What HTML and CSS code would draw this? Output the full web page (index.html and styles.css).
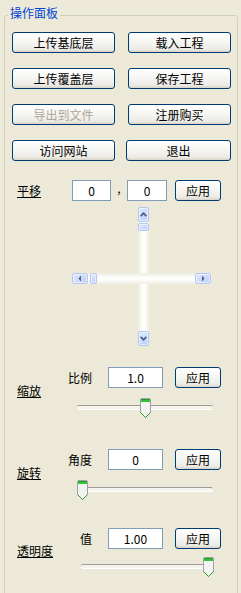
FILE: index.html
```html
<!DOCTYPE html>
<html lang="zh-CN">
<head>
    <meta charset="UTF-8">
    <meta name="viewport" content="width=device-width, initial-scale=1.0">
    <title>操作面板</title>
    <link rel="stylesheet" href="styles.css">
</head>
<body>

    <div class="panel">
        <span class="panel-title">操作面板</span>

        <!-- Main actions -->
        <div class="actions">
            <button class="btn">上传基底层</button>
            <button class="btn">载入工程</button>
            <button class="btn">上传覆盖层</button>
            <button class="btn">保存工程</button>
            <button class="btn" disabled>导出到文件</button>
            <button class="btn">注册购买</button>
            <button class="btn">访问网站</button>
            <button class="btn btn-shift">退出</button>
        </div>

        <!-- Pan -->
        <div class="pan-row">
            <span class="prop-name pan-name">平移</span>
            <input class="field field-x" type="text" value="0">
            <span class="sep">,</span>
            <input class="field field-y" type="text" value="0">
            <button class="btn btn-apply">应用</button>
        </div>

        <div class="cross">
            <div class="vscroll">
                <span class="sb-btn sb-vbtn">
                    <svg width="7" height="5" viewBox="0 0 7 5"><path d="M0.6 4.2L3.5 1.3L6.4 4.2" fill="none" stroke="#4D6185" stroke-width="1.7"/></svg>
                </span>
                <span class="sb-thumb sb-vthumb"></span>
                <span class="sb-fill"></span>
                <span class="sb-btn sb-vbtn">
                    <svg width="7" height="5" viewBox="0 0 7 5"><path d="M0.6 0.8L3.5 3.7L6.4 0.8" fill="none" stroke="#4D6185" stroke-width="1.7"/></svg>
                </span>
            </div>
            <div class="hscroll">
                <span class="sb-btn sb-hbtn">
                    <svg width="4" height="7" viewBox="0 0 4 7"><path d="M3 0.5v6L0.5 3.5z" fill="#4D6185"/></svg>
                </span>
                <span class="sb-thumb sb-hthumb"></span>
                <span class="sb-fill"></span>
                <span class="sb-btn sb-hbtn">
                    <svg width="4" height="7" viewBox="0 0 4 7"><path d="M1 0.5v6L3.5 3.5z" fill="#4D6185"/></svg>
                </span>
            </div>
        </div>

        <!-- Scale -->
        <div class="prop prop-scale">
            <span class="prop-name">缩放</span>
            <div class="prop-body">
                <div class="prop-row">
                    <span class="prop-label">比例</span>
                    <input class="field" type="text" value="1.0">
                    <button class="btn btn-apply">应用</button>
                </div>
                <div class="slider">
                    <span class="thumb" style="margin-left: 63px">
                        <svg width="11" height="20" viewBox="0 0 11 20"><path d="M1.5 0.5h8a1 1 0 0 1 1 1v13l-5 5-5-5v-13a1 1 0 0 1 1-1z" fill="#F3F3EF" stroke="#9CA3AE"/><rect x="1" y="1" width="9" height="3" fill="#36C236"/><rect x="1" y="1" width="9" height="1" fill="#1FA01F"/><path d="M10.5 14.5l-5 5-5-5" fill="none" stroke="#2E9A2E"/></svg>
                    </span>
                </div>
            </div>
        </div>

        <!-- Rotate -->
        <div class="prop prop-rotate">
            <span class="prop-name">旋转</span>
            <div class="prop-body">
                <div class="prop-row">
                    <span class="prop-label">角度</span>
                    <input class="field" type="text" value="0">
                    <button class="btn btn-apply">应用</button>
                </div>
                <div class="slider">
                    <span class="thumb" style="margin-left: 0px">
                        <svg width="11" height="20" viewBox="0 0 11 20"><path d="M1.5 0.5h8a1 1 0 0 1 1 1v13l-5 5-5-5v-13a1 1 0 0 1 1-1z" fill="#F3F3EF" stroke="#9CA3AE"/><rect x="1" y="1" width="9" height="3" fill="#36C236"/><rect x="1" y="1" width="9" height="1" fill="#1FA01F"/><path d="M10.5 14.5l-5 5-5-5" fill="none" stroke="#2E9A2E"/></svg>
                    </span>
                </div>
            </div>
        </div>

        <!-- Opacity -->
        <div class="prop prop-alpha">
            <span class="prop-name">透明度</span>
            <div class="prop-body">
                <div class="prop-row">
                    <span class="prop-label">值</span>
                    <input class="field" type="text" value="1.00">
                    <button class="btn btn-apply">应用</button>
                </div>
                <div class="slider">
                    <span class="thumb" style="margin-left: 122px">
                        <svg width="11" height="20" viewBox="0 0 11 20"><path d="M1.5 0.5h8a1 1 0 0 1 1 1v13l-5 5-5-5v-13a1 1 0 0 1 1-1z" fill="#F3F3EF" stroke="#9CA3AE"/><rect x="1" y="1" width="9" height="3" fill="#36C236"/><rect x="1" y="1" width="9" height="1" fill="#1FA01F"/><path d="M10.5 14.5l-5 5-5-5" fill="none" stroke="#2E9A2E"/></svg>
                    </span>
                </div>
            </div>
        </div>
    </div>

</body>
</html>
```

FILE: styles.css
```css
html, body {
    height: 593px;
    overflow: hidden;
}
body {
    margin: 0;
    background-color: #ece9d8;
    font-family: "Noto Sans CJK SC", "Liberation Sans", sans-serif;
    font-size: 12px;
    color: #000;
}
.panel {
    position: relative;
    margin: 15px 3px 0 4px;
    padding: 16px 0 40px 7px;
    border: 1px solid #d0d0bf;
    border-radius: 3px;
}
.panel-title {
    position: absolute;
    top: -10px;
    left: 3px;
    padding: 0 2px;
    line-height: 14px;
    color: #0046d5;
    background-color: #ece9d8;
}
.actions {
    display: grid;
    grid-template-columns: 103px 103px;
    column-gap: 13px;
    row-gap: 15px;
}
.btn {
    height: 21px;
    padding: 0;
    font: inherit;
    line-height: 19px;
    color: #000;
    border: 1px solid #003c74;
    border-radius: 3px;
    background: linear-gradient(#ffffff 0%, #f6f6f3 45%, #ecebe6 85%, #d8d3c8 100%);
}
.btn:disabled {
    color: #aca899;
}
.btn-shift {
    margin-left: -2px;
}
.btn-apply {
    width: 46px;
}
.field {
    box-sizing: border-box;
    width: 55px;
    height: 21px;
    padding: 0;
    font: inherit;
    color: #000;
    text-align: center;
    border: 1px solid #7f9db9;
    background-color: #fff;
}
.prop-name {
    text-decoration: underline;
}

/* pan */
.pan-row {
    display: flex;
    align-items: center;
    height: 21px;
    margin-top: 19px;
    padding-left: 5px;
}
.pan-name {
    width: 55px;
}
.field-x {
    width: 39px;
}
.field-y {
    width: 40px;
}
.sep {
    width: 16px;
    padding-bottom: 5px;
    line-height: 12px;
    text-align: center;
}
.pan-row .btn-apply {
    margin-left: 8px;
}

/* cross of scrollbars */
.cross {
    display: grid;
    width: 139px;
    height: 139px;
    margin: 6px 0 0 60px;
}
.vscroll, .hscroll {
    grid-area: 1 / 1;
    display: flex;
}
.vscroll {
    flex-direction: column;
    width: 11px;
    height: 139px;
    margin-left: 66px;
    background: linear-gradient(to right, #eeede5, #fefefb 45%, #fefefb 60%, #eeede5);
}
.hscroll {
    align-self: start;
    width: 139px;
    height: 11px;
    margin-top: 66px;
    background: linear-gradient(#eeede5, #fefefb 45%, #fefefb 60%, #eeede5);
}
.sb-btn, .sb-thumb {
    box-sizing: border-box;
    display: flex;
    align-items: center;
    justify-content: center;
    border: 1px solid #b4c7f3;
    border-radius: 2px;
    background: linear-gradient(135deg, #dfe8fe, #bccffa);
    box-shadow: inset 0 0 0 1px rgba(255, 255, 255, 0.55);
}
.sb-vbtn {
    height: 15px;
}
.sb-hbtn {
    width: 16px;
}
.sb-vthumb {
    height: 8px;
    margin-top: 1px;
}
.sb-hthumb {
    width: 7px;
    margin-left: 2px;
}
.sb-fill {
    flex: 1;
}

/* property sections */
.prop {
    display: flex;
    align-items: center;
    padding-left: 5px;
}
.prop > .prop-name {
    width: 43px;
    padding-bottom: 4px;
}
.prop-scale {
    margin-top: 21px;
}
.prop-rotate {
    margin-top: 31px;
}
.prop-alpha {
    margin-top: 28px;
}
.prop-row {
    display: flex;
    align-items: center;
    height: 21px;
}
.prop-label {
    width: 32px;
    margin-right: 16px;
    text-align: right;
}
.prop-row .btn-apply {
    margin-left: 12px;
}
.slider {
    position: relative;
    display: flex;
    width: 136px;
    height: 20px;
    margin: 10px 0 0 17px;
}
.prop-alpha .slider {
    width: 132px;
    margin: 8px 0 0 21px;
}
.slider::before {
    content: "";
    position: absolute;
    left: 0;
    right: 0;
    top: 7px;
    height: 3px;
    border-radius: 2px;
    border-top: 1px solid #9d9c99;
    background-color: #f4f3ee;
    box-shadow: 0 1px 0 #fff;
}
.thumb {
    position: relative;
    display: block;
    width: 11px;
    height: 20px;
}
.thumb svg {
    display: block;
}
```
